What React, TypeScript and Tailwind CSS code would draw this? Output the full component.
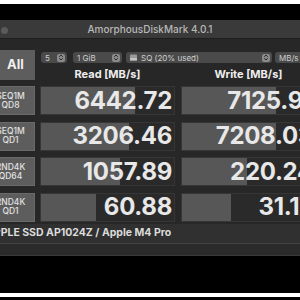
import React from 'react';

const ROWS = [
  { l1: 'SEQ1M', l2: 'QD8', read: '6442.72', rf: 94, write: '7125.91', wf: 94 },
  { l1: 'SEQ1M', l2: 'QD1', read: '3206.46', rf: 88, write: '7208.03', wf: 94 },
  { l1: 'RND4K', l2: 'QD64', read: '1057.89', rf: 79, write: '220.24', wf: 65 },
  { l1: 'RND4K', l2: 'QD1', read: '60.88', rf: 55, write: '31.17', wf: 49 },
];

const Stepper = () => (
  <span className="ml-auto mr-[2px] flex h-[8px] w-[8px] items-center justify-center rounded-[2px] bg-[#8a8a8a]">
    <svg width="6" height="7" viewBox="0 0 6 7" fill="none" stroke="#2a2a2a" strokeWidth="1" strokeLinecap="round" strokeLinejoin="round">
      <path d="M1.5 2.5 L3 1 L4.5 2.5" />
      <path d="M1.5 4.5 L3 6 L4.5 4.5" />
    </svg>
  </span>
);

const Select = ({ w, ml, children, stepper = true }: { w: string; ml: string; children: React.ReactNode; stepper?: boolean }) => (
  <div className={`${w} ${ml} flex h-[11px] items-center rounded-[3px] bg-[#4a4a4a] pl-[4px] text-[8px] leading-none text-[#cfcfcf]`}>
    {children}
    {stepper && <Stepper />}
  </div>
);

const Cell = ({ fill, value }: { fill: number; value: string }) => (
  <div className="relative flex h-full w-[135px] items-center justify-end border border-[#363636] bg-[#2a2a2a] pr-[2px]">
    <div className="absolute bottom-0 left-0 top-0 bg-[#575757]" style={{ width: fill }} />
    <span className="relative text-[24px] font-bold leading-none tracking-[-0.3px] text-[#e8e8e8]">{value}</span>
  </div>
);

export default function App() {
  return (
    <div className="h-[300px] w-[300px] overflow-hidden bg-black font-[Inter,'Noto_Sans',sans-serif]">
      <div className="h-[4px] bg-white" />
      <div className="ml-[-24px] mt-[16px] w-[348px]">
        {/* title bar */}
        <div className="relative flex h-[18px] items-center justify-center rounded-t-[8px] bg-[#3a3a3a]">
          <div className="absolute left-[25px] top-[6.5px] h-[7px] w-[7px] rounded-full bg-[#5a5a5a]" />
          <span className="text-[10px] font-medium text-[#b8b8b8]">AmorphousDiskMark 4.0.1</span>
        </div>

        <div className="border-t border-[#1e1e1e] bg-[#272727] px-[8px] pt-[11px]">
          {/* controls */}
          <div className="flex h-[30px]">
            <div className="flex h-[30px] w-[51px] items-center justify-center bg-[#5d5d5d] pl-[12px] text-[13px] font-bold text-[#f0f0f0]">
              All
            </div>
            <div className="ml-[5px] flex flex-col">
              <div className="mt-[2px] flex">
                <Select w="w-[26px]" ml="ml-[1px]">5</Select>
                <Select w="w-[49px]" ml="ml-[6px]">1 GiB</Select>
                <Select w="w-[146px]" ml="ml-[4px]">
                  <svg width="7" height="7" viewBox="0 0 7 7" className="mr-[4px]">
                    <rect x="0" y="0.5" width="7" height="6" rx="0.8" fill="#9a9a9a" />
                    <rect x="0" y="4" width="7" height="2.5" rx="0.5" fill="#c4c4c4" />
                  </svg>
                  SQ (20% used)
                </Select>
                <Select w="w-[40px]" ml="ml-[3px]" stepper={false}>MB/s</Select>
              </div>
              <div className="mt-[5px] flex">
                <div className="w-[135px] text-center text-[11px] font-bold leading-[12px] text-[#eeeeee]">Read [MB/s]</div>
                <div className="ml-[6px] w-[135px] text-center text-[11px] font-bold leading-[12px] text-[#eeeeee]">Write [MB/s]</div>
              </div>
            </div>
          </div>

          {/* results */}
          <div className="mt-[6px] flex flex-col gap-[6.5px]">
            {ROWS.map((r, i) => (
              <div key={i} className="flex h-[29px]">
                <div className="flex w-[51px] flex-col items-center justify-center border border-[#6a6a6a] bg-[#5d5d5d] pl-[2px] text-[8.5px] font-medium leading-[9px] text-[#e2e2e2]">
                  <span>{r.l1}</span>
                  <span>{r.l2}</span>
                </div>
                <div className="ml-[5px]">
                  <Cell fill={r.rf} value={r.read} />
                </div>
                <div className="ml-[6px]">
                  <Cell fill={r.wf} value={r.write} />
                </div>
              </div>
            ))}
          </div>

          {/* drive info */}
          <div className="mx-[-8px] mt-[2px] flex h-[19px] items-center bg-[#303030] pl-[10px] text-[10.5px] font-bold text-[#dcdcdc]">
            APPLE SSD AP1024Z / Apple M4 Pro
          </div>
        </div>
        <div className="h-[13px] rounded-b-[8px] border-t border-[#444444] border-b border-b-[#3a3a3a] bg-[#2b2b2b]" />
      </div>
      <div className="mt-[37px] h-[4px] bg-white" />
    </div>
  );
}
